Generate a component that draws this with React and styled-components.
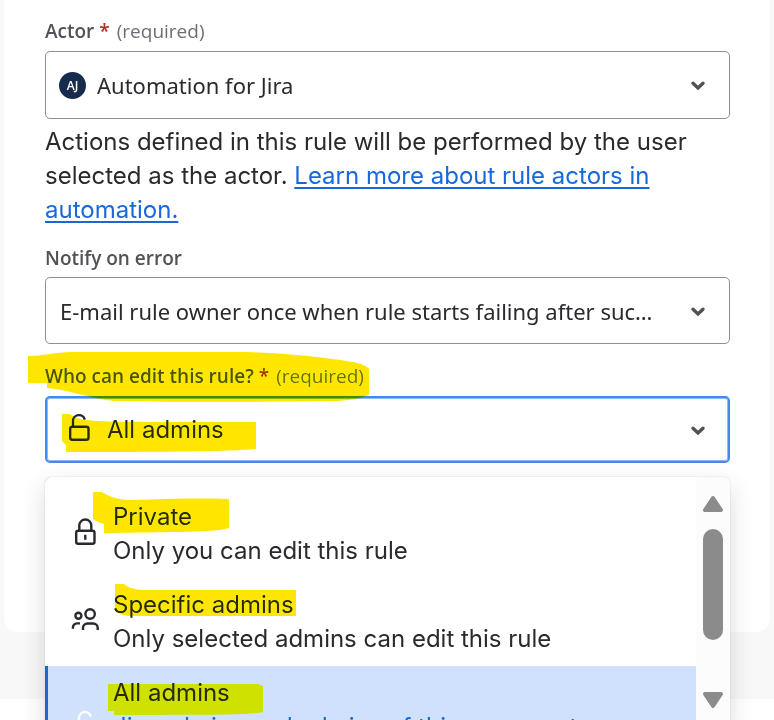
import React from "react";
import styled, { createGlobalStyle } from "styled-components";

const GlobalStyle = createGlobalStyle`
  * {
    box-sizing: border-box;
  }
  body {
    margin: 0;
    background: #ffffff;
    color: #292a2e;
    font-family: Inter, "Liberation Sans", sans-serif;
  }
`;

const Page = styled.div`
  min-height: 100vh;
  overflow: hidden;
`;

const Section = styled.section`
  padding: 0 4px 67px;
  background: #f8f8f8;
`;

const Card = styled.form`
  padding: 19px 40px 169px 41px;
  background: #ffffff;
  border-radius: 0 0 14px 14px;
`;

const Field = styled.div`
  position: relative;
  margin-bottom: ${(props) => props.$gap || 0}px;
`;

const Label = styled.label`
  display: block;
  width: max-content;
  margin-bottom: ${(props) => props.$gap || 8}px;
  font-family: "Open Sans", "Noto Sans", sans-serif;
  font-size: 19px;
  font-weight: 600;
  line-height: 24px;
  color: #505258;
`;

const Star = styled.span`
  color: #ae2e24;
  margin: 0 7px 0 5px;
`;

const Required = styled.span`
  font-weight: 500;
  color: #6b6e76;
`;

const Control = styled.div`
  position: relative;
  display: flex;
  align-items: center;
  height: ${(props) => (props.$tall ? 68 : 67)}px;
  padding: ${(props) => (props.$focused ? "0 19px 0 16px" : "0 20px 0 13px")};
  background: #ffffff;
  border: ${(props) =>
    props.$focused ? "2px solid #4688ec" : "1px solid #8c8f97"};
  border-radius: 5px;
  box-shadow: ${(props) => (props.$focused ? "inset 0 0 0 1px #8fb8f6" : "none")};
`;

const Select = styled.select`
  flex: 1;
  min-width: 0;
  height: 40px;
  margin-left: ${(props) => props.$indent || 0}px;
  margin-right: 32px;
  padding: 0;
  appearance: none;
  border: 0;
  outline: 0;
  background: transparent;
  color: #292a2e;
  font-family: ${(props) =>
    props.$inter ? "Inter, sans-serif" : '"Noto Sans", "Open Sans", sans-serif'};
  font-size: ${(props) => (props.$inter ? 24 : 22)}px;
  white-space: nowrap;
  overflow: hidden;
  text-overflow: ellipsis;
`;

const Avatar = styled.span`
  display: grid;
  place-items: center;
  width: 27px;
  height: 27px;
  border-radius: 50%;
  background: #172b4d;
  color: #ffffff;
  font-family: "Open Sans", sans-serif;
  font-size: 12px;
  font-weight: 600;
`;

const Help = styled.p`
  margin: 6px 0 19px;
  font-size: 24px;
  line-height: 34px;
`;

const Link = styled.a`
  color: #1868db;
  text-decoration-thickness: 2px;
  text-underline-offset: 3px;
`;

const Menu = styled.div`
  position: absolute;
  top: 100%;
  left: 0;
  right: 0;
  display: flex;
  height: 250px;
  margin-top: 14px;
  overflow: hidden;
  background: #ffffff;
  border-radius: 6px;
  box-shadow: 0 0 1px rgba(30, 31, 33, 0.4), 0 10px 24px rgba(30, 31, 33, 0.16);
`;

const Options = styled.ul`
  flex: 1;
  margin: 0;
  padding: 13px 0 0;
  list-style: none;
`;

const Option = styled.li`
  display: flex;
  align-items: center;
  padding: 10px 24px 10px ${(props) => (props.$selected ? 21 : 24)}px;
  border-left: ${(props) => (props.$selected ? "3px solid #1868db" : "0")};
  background: ${(props) => (props.$selected ? "#cfe1fd" : "transparent")};
  color: ${(props) => (props.$selected ? "#1868db" : "#292a2e")};
`;

const OptionText = styled.div`
  flex: 1;
  margin-left: 12px;
  font-size: 24px;
  line-height: 34px;
`;

const OptionTitle = styled.div`
  color: #292a2e;
`;

const Scrollbar = styled.div`
  display: flex;
  flex-direction: column;
  align-items: center;
  width: 34px;
  padding: 18px 0;
  background: #fcfcfc;
`;

const Thumb = styled.div`
  width: 20px;
  height: 111px;
  margin: 16px 0 auto;
  border-radius: 10px;
  background: #8b8b8b;
`;

const Marker = styled.svg`
  position: absolute;
  top: ${(props) => props.$top}px;
  left: ${(props) => props.$left}px;
  mix-blend-mode: darken;
  pointer-events: none;
`;

const Highlight = ({ top, left, width, height, d }) => (
  <Marker
    $top={top}
    $left={left}
    width={width}
    height={height}
    fill="#ffe600"
    aria-hidden="true"
  >
    <path d={d} />
  </Marker>
);

const Chevron = () => (
  <svg width="22" height="22" viewBox="0 0 22 22" fill="none" aria-hidden="true">
    <path
      d="M6 9.200l5 4.700 5-4.700"
      stroke="#505258"
      strokeWidth="3.4"
      strokeLinecap="round"
    />
  </svg>
);

const LockIcon = ({ open }) => (
  <svg width="32" height="32" viewBox="0 0 32 32" fill="none" aria-hidden="true">
    <g stroke="currentColor" strokeWidth="2.4">
      <rect x="7.200" y="12.800" width="18.300" height="13" rx="2" />
      <path
        d={
          open
            ? "M10 12.800V7.500a6 6 0 0 1 11.800-1.900"
            : "M10.300 12.800V7.500a6 6 0 0 1 12 0V12.800"
        }
      />
      {!open && <path d="M16.300 16.800v5" />}
    </g>
  </svg>
);

const WhiteIcon = styled.span`
  display: flex;
  color: #ffffff;
`;

const PeopleIcon = () => (
  <svg width="32" height="32" viewBox="0 0 32 32" fill="none" aria-hidden="true">
    <g stroke="currentColor" strokeWidth="2.4">
      <circle cx="21.100" cy="8" r="4.700" />
      <circle cx="9.400" cy="9.700" r="3" />
      <path d="M14 24v-2a4.500 4.500 0 0 1 4.500-4.500h5.700a4.500 4.500 0 0 1 4.500 4.500v2" />
      <path d="M3.900 22.800v-1.400a4 4 0 0 1 4-4H11" />
    </g>
  </svg>
);

const Arrow = ({ down }) => (
  <svg width="22" height="18" viewBox="0 0 22 18" aria-hidden="true">
    <path
      d={down ? "M3 3h16l-8 12z" : "M3 15h16L11 3z"}
      fill="#8b8b8b"
      stroke="#8b8b8b"
      strokeWidth="4"
      strokeLinejoin="round"
    />
  </svg>
);

const options = [
  {
    title: "Private",
    text: "Only you can edit this rule",
    icon: <LockIcon />,
    mark: {
      top: 14,
      left: 48,
      width: 138,
      height: 44,
      d: "M0 1H9C15 5 24 9 38 9C70 8 108 7 136 8V37C128 40 110 41 11 42V33C7 32 3 30 0 28Z",
    },
  },
  {
    title: "Specific admins",
    text: "Only selected admins can edit this rule",
    icon: <PeopleIcon />,
    mark: {
      top: 107,
      left: 70,
      width: 182,
      height: 35,
      d: "M0 0H9C14 4 20 6 34 6H181V32H17C10 32 4 30 0 27Z",
    },
  },
  {
    title: "All admins",
    text: "Jira admins and admins of this space get access as rule editors",
    icon: (
      <WhiteIcon>
        <LockIcon open />
      </WhiteIcon>
    ),
    selected: true,
    mark: {
      top: 207,
      left: 63,
      width: 156,
      height: 34,
      d: "M0 0H150L155 2V28C140 31 120 31 6 31V27H0Z",
    },
  },
];

const App = () => {
  return (
    <Page>
      <GlobalStyle />
      <Section>
        <Card>
          <Field>
            <Label htmlFor="actor">
              Actor<Star>*</Star>
              <Required>(required)</Required>
            </Label>
            <Control $tall>
              <Avatar>AJ</Avatar>
              <Select id="actor" $indent={11}>
                <option>Automation for Jira</option>
              </Select>
              <Chevron />
            </Control>
            <Help>
              Actions defined in this rule will be performed by the user selected
              as the actor.{" "}
              <Link href="#rule-actors">
                Learn more about rule actors in automation.
              </Link>
            </Help>
          </Field>

          <Field $gap={20}>
            <Label htmlFor="notify" $gap={7}>
              Notify on error
            </Label>
            <Control>
              <Select id="notify" $indent={1}>
                <option>
                  E-mail rule owner once when rule starts failing after success
                </option>
              </Select>
              <Chevron />
            </Control>
          </Field>

          <Field>
            <Label htmlFor="editors">
              Who can edit this rule?<Star>*</Star>
              <Required>(required)</Required>
            </Label>
            <Control $focused>
              <LockIcon open />
              <Select id="editors" $inter $indent={12}>
                <option>All admins</option>
              </Select>
              <Chevron />
            </Control>
            <Highlight
              top={-12}
              left={-17}
              width={342}
              height={50}
              d="M0 4C15 4 28 0 44 0H220C270 2 300 6 325 10C334 12 339 14 341 17V43C330 47 322 48 310 49C220 50 130 50 86 49C60 46 42 38 19 36V31H0Z"
            />
            <Highlight
              top={50}
              left={17}
              width={195}
              height={39}
              d="M0 0H8C13 4 20 6 34 7C60 8 80 8 194 8V35C170 37 140 38 4 38V31L0 27Z"
            />
            <Menu>
              <Options role="listbox" aria-label="Who can edit this rule?">
                {options.map((option) => (
                  <Option
                    key={option.title}
                    role="option"
                    aria-selected={!!option.selected}
                    $selected={option.selected}
                  >
                    {option.icon}
                    <OptionText>
                      <OptionTitle>{option.title}</OptionTitle>
                      {option.text}
                    </OptionText>
                    <Highlight {...option.mark} />
                  </Option>
                ))}
              </Options>
              <Scrollbar aria-hidden="true">
                <Arrow />
                <Thumb />
                <Arrow down />
              </Scrollbar>
            </Menu>
          </Field>
        </Card>
      </Section>
    </Page>
  );
};

export default App;
